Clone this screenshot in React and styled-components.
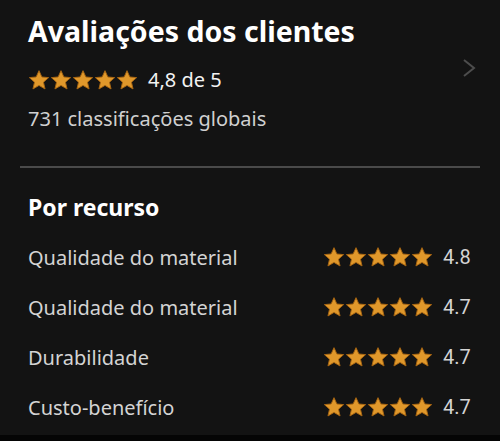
import styled, { createGlobalStyle } from "styled-components";

const GlobalStyle = createGlobalStyle`
  html, body {
    margin: 0;
    padding: 0;
    background: #050505;
  }
  body {
    font-family: "Noto Sans", "Open Sans", sans-serif;
  }
`;

const features = [
  { name: "Qualidade do material", score: "4.8" },
  { name: "Qualidade do material", score: "4.7" },
  { name: "Durabilidade", score: "4.7" },
  { name: "Custo-benefício", score: "4.7" },
];

const Star = ({ size }) => (
  <svg width={size} height={size} viewBox="0 0 24 24">
    <path
      d="M12 1.8l3.1 6.9 7.4.7-5.6 5 1.7 7.4L12 17.9l-6.6 3.9 1.7-7.4-5.6-5 7.4-.7z"
      fill="#e0982b"
      stroke="#a86612"
      strokeWidth="1"
      strokeLinejoin="round"
    />
  </svg>
);

const Stars = ({ size = 22 }) => (
  <StarRow>
    {[0, 1, 2, 3, 4].map((i) => (
      <Star key={i} size={size} />
    ))}
  </StarRow>
);

const App = () => {
  return (
    <>
      <GlobalStyle />
      <Page>
        <Summary>
          <div>
            <Title>Avaliações dos clientes</Title>
            <RatingLine>
              <Stars size={22} />
              <span>4,8 de 5</span>
            </RatingLine>
            <Count>731 classificações globais</Count>
          </div>
          <Chevron viewBox="0 0 14 20" width="14" height="20">
            <path d="M2 2l10 8-10 8" fill="none" stroke="#4d4d4d" strokeWidth="2" />
          </Chevron>
        </Summary>
        <Divider />
        <Heading>Por recurso</Heading>
        <List>
          {features.map((f, i) => (
            <FeatureRow key={i}>
              <FeatureName>{f.name}</FeatureName>
              <Score>
                <Stars size={22} />
                <span>{f.score}</span>
              </Score>
            </FeatureRow>
          ))}
        </List>
      </Page>
    </>
  );
};

export default App;

const Page = styled.div`
  width: 500px;
  height: 435px;
  box-sizing: border-box;
  background: #131313;
  padding: 12px 28px 0 28px;
  color: #fff;
  overflow: hidden;
`;

const Summary = styled.div`
  display: flex;
  justify-content: space-between;
  align-items: flex-start;
`;

const Title = styled.h1`
  margin: 0;
  font-size: 28.5px;
  font-weight: 700;
  line-height: 38px;
  color: #fff;
`;

const RatingLine = styled.div`
  display: flex;
  align-items: center;
  gap: 10px;
  margin-top: 18px;
  font-size: 20px;
  line-height: 24px;
  color: #f2f2f2;
`;

const StarRow = styled.div`
  display: flex;
  gap: 0;
`;

const Count = styled.div`
  margin-top: 14px;
  font-size: 20px;
  line-height: 26px;
  color: #d0d0d0;
`;

const Chevron = styled.svg`
  margin-right: -4px;
  margin-top: 46px;
`;

const Divider = styled.div`
  height: 2px;
  background: #4a4a4a;
  margin: 34px -8px 0 -8px;
`;

const Heading = styled.h2`
  margin: 24px 0 0 0;
  font-size: 23px;
  line-height: 30px;
  font-weight: 700;
  color: #fff;
`;

const List = styled.div`
  display: flex;
  flex-direction: column;
  margin-top: 10px;
`;

const FeatureRow = styled.div`
  display: flex;
  justify-content: space-between;
  align-items: center;
  height: 50px;
`;

const FeatureName = styled.span`
  font-size: 20px;
  color: #d4d4d4;
`;

const Score = styled.div`
  display: flex;
  align-items: center;
  gap: 10px;
  font-family: Roboto, "Liberation Sans", sans-serif;
  font-size: 20px;
  color: #d4d4d4;
  span {
    width: 29px;
  }
`;
